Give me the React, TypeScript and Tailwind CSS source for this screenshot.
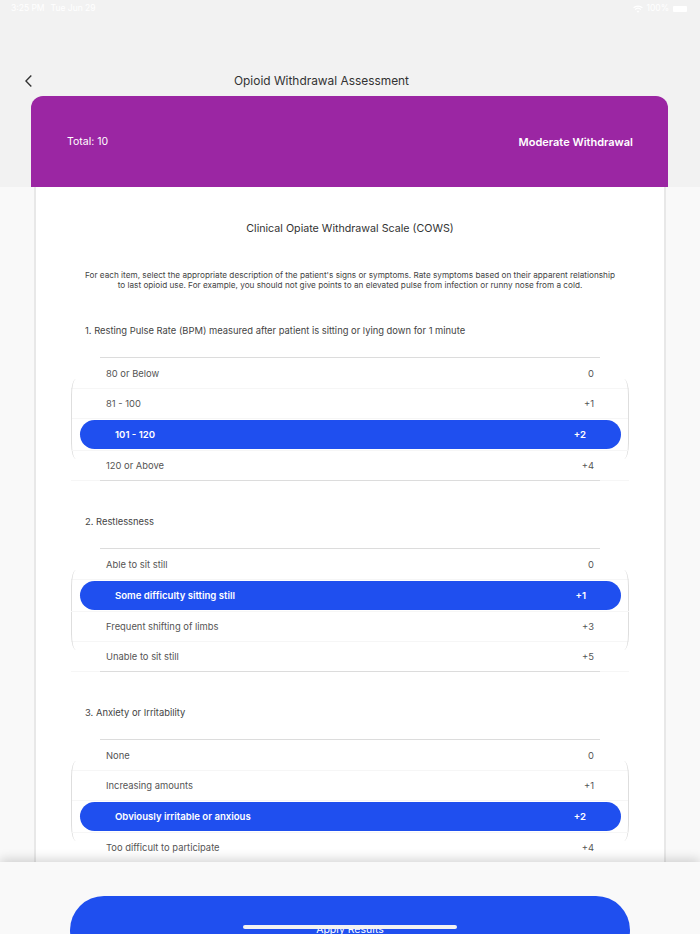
import React from "react";

const sections = [
  {
    question: "1. Resting Pulse Rate (BPM) measured after patient is sitting or lying down for 1 minute",
    options: [
      { label: "80 or Below", score: "0" },
      { label: "81 - 100", score: "+1" },
      { label: "101 - 120", score: "+2", selected: true },
      { label: "120 or Above", score: "+4" },
    ],
  },
  {
    question: "2. Restlessness",
    options: [
      { label: "Able to sit still", score: "0" },
      { label: "Some difficulty sitting still", score: "+1", selected: true },
      { label: "Frequent shifting of limbs", score: "+3" },
      { label: "Unable to sit still", score: "+5" },
    ],
  },
  {
    question: "3. Anxiety or Irritability",
    options: [
      { label: "None", score: "0" },
      { label: "Increasing amounts", score: "+1" },
      { label: "Obviously irritable or anxious", score: "+2", selected: true },
      { label: "Too difficult to participate", score: "+4" },
    ],
  },
];

function Section({ question, options }: (typeof sections)[number]) {
  return (
    <div className="mt-[34px] first:mt-[33px]">
      <p className="h-[14px] px-[49px] text-[9.4px] leading-[14px] text-[#444]">{question}</p>
      <div className="relative mx-[35px] mt-[19px]">
        <div className="absolute inset-x-0 top-[22px] h-[80px] rounded-[5px/16px] border-x border-[#dedede]" />
        <div className="mx-[29px] mb-px h-px bg-[#dcdcdc]" />
        {options.map((option) =>
          option.selected ? (
            <div key={option.label} className="relative h-[32px] border-b border-[#f6f6f6] py-px">
              <div className="ml-[9px] mr-[8px] flex h-[29px] items-center justify-between rounded-full bg-[#1f4fef] pl-[35px] pr-[35px] pt-px text-[9.6px] font-semibold text-white">
                <span>{option.label}</span>
                <span>{option.score}</span>
              </div>
            </div>
          ) : (
            <div
              key={option.label}
              className="flex h-[30px] items-center justify-between border-b border-[#f6f6f6] px-[35px] pt-px text-[9.4px] text-[#555]"
            >
              <span>{option.label}</span>
              <span>{option.score}</span>
            </div>
          ),
        )}
        <div className="mx-[29px] -mt-px h-px bg-[#dcdcdc]" />
      </div>
    </div>
  );
}

export default function App() {
  return (
    <div className="flex h-[934px] w-[700px] flex-col overflow-hidden bg-[#f9f9f9] font-['Inter',sans-serif]">
      <div className="h-[187px] shrink-0 bg-[#f2f2f2]">
        <div className="flex h-[17px] items-center justify-between pl-[11px] pr-[13px] text-[8.5px] text-white">
          <div className="flex gap-[6px]">
            <span>3:25 PM</span>
            <span>Tue Jun 29</span>
          </div>
          <div className="flex items-center gap-[3px]">
            <svg width="10" height="8" viewBox="0 0 10 8" fill="none" stroke="white" strokeWidth="1.2">
              <path d="M0.6 2.8C3 0.5 7 0.5 9.4 2.8" />
              <path d="M2.2 4.5C3.8 3 6.2 3 7.8 4.5" />
              <path d="M5 7.8L3.7 6.2C4.4 5.6 5.6 5.6 6.3 6.2Z" fill="white" stroke="none" />
            </svg>
            <span>100%</span>
            <div className="ml-[1px] h-[6px] w-[14px] rounded-[1px] bg-white" />
          </div>
        </div>
        <div className="mt-[53px] flex h-[22px] items-center pl-[25px]">
          <svg width="7" height="12" viewBox="0 0 7 12" fill="none" stroke="#333" strokeWidth="1.4">
            <path d="M6.3 0.6L0.9 6L6.3 11.4" />
          </svg>
          <h1 className="ml-[202px] text-[11.9px] font-normal text-[#333]">Opioid Withdrawal Assessment</h1>
        </div>
        <div className="ml-[31px] mr-[32px] mt-[4px] flex h-[91px] items-center justify-between rounded-t-[12px] bg-[#9b26a3] pl-[36px] pr-[35px] pt-px text-white">
          <span className="text-[10.5px]">Total: 10</span>
          <span className="text-[11px] font-semibold">Moderate Withdrawal</span>
        </div>
      </div>

      <div className="min-h-0 flex-1 overflow-hidden">
        <div className="mx-[34px] border-x-2 border-[#e8e8e8] bg-white pt-[34px]">
          <h2 className="h-[16px] text-center text-[10.7px] font-normal leading-[16px] text-[#333]">
            Clinical Opiate Withdrawal Scale (COWS)
          </h2>
          <p className="mt-[33px] text-center text-[8.2px] leading-[10px] text-[#444]">
            For each item, select the appropriate description of the patient's signs or symptoms. Rate symptoms based on their apparent relationship
            <br />
            to last opioid use. For example, you should not give points to an elevated pulse from infection or runny nose from a cold.
          </p>
          {sections.map((section) => (
            <Section key={section.question} {...section} />
          ))}
        </div>
      </div>

      <div className="relative z-10 h-[72px] shrink-0 bg-[#f9f9f9] px-[70px] pt-[34px] shadow-[0_-3px_10px_rgba(0,0,0,0.16)]">
        <button className="flex h-[68px] w-full items-start justify-center rounded-[34px] bg-[#1f4fef] pt-[26px] text-[10.5px] leading-[16px] text-white">
          Apply Results
        </button>
        <div className="absolute left-[243px] top-[63px] h-[4px] w-[214px] rounded-full bg-[#f2f2f2]" />
      </div>
    </div>
  );
}
